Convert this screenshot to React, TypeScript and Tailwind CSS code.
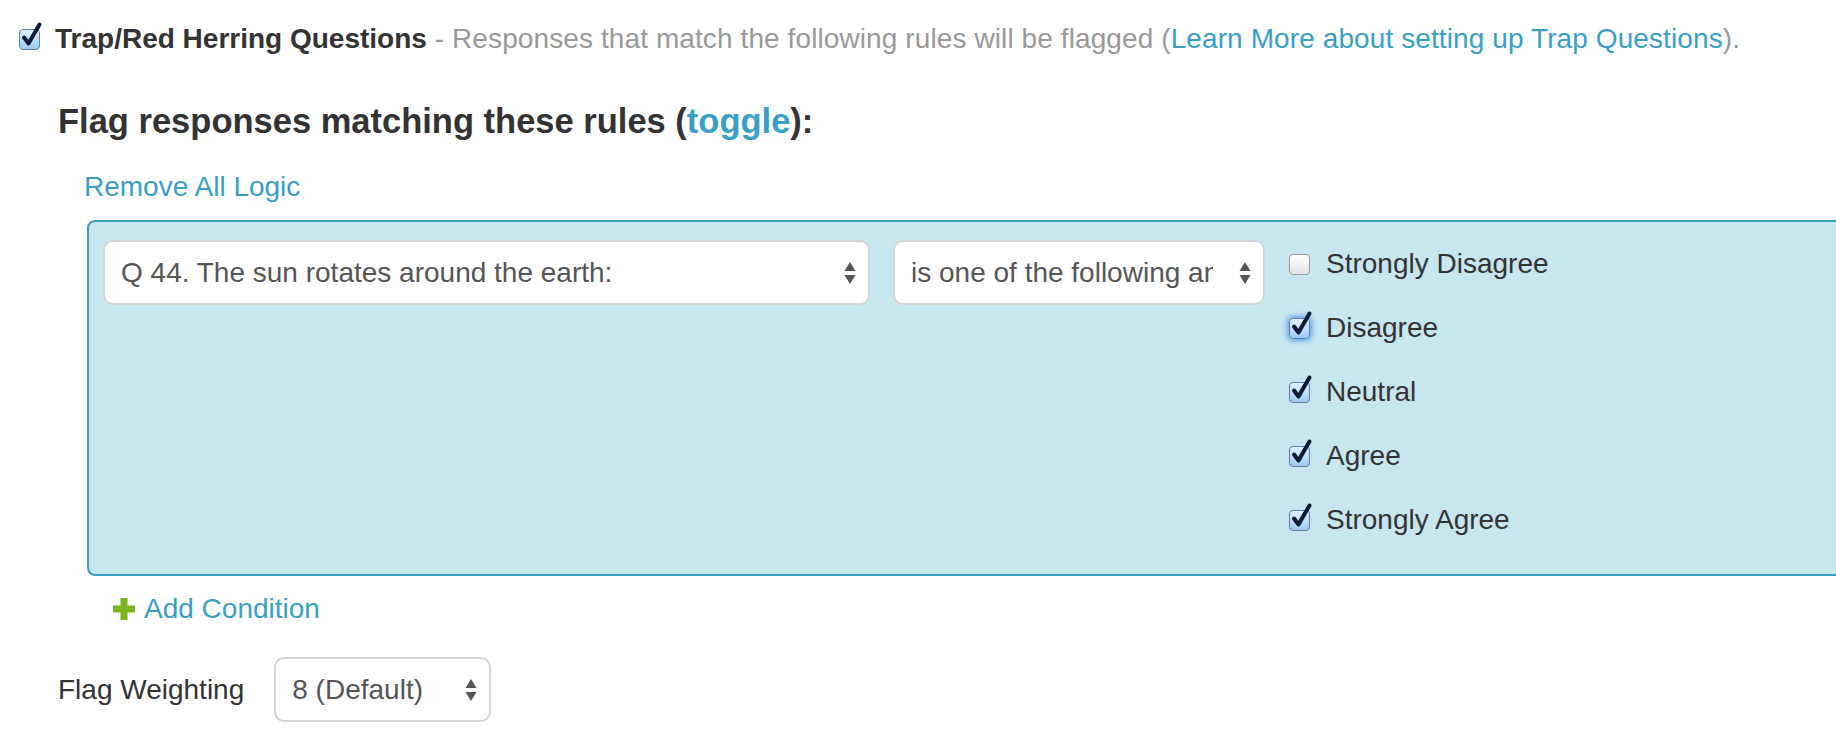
import React from 'react';

const LINK = 'text-[#3a9fc5]';

function CheckBox({ checked, focused }: { checked?: boolean; focused?: boolean }) {
  return (
    <span className="relative inline-block w-[21px] h-[21px] shrink-0">
      <span
        className={
          checked
            ? 'absolute inset-0 rounded-[4px] border border-[#5d7fa6] bg-[linear-gradient(#e3f1ff,#9ccbf3)]' +
              (focused ? ' shadow-[0_0_5px_2px_rgba(70,140,230,0.75)]' : '')
            : 'absolute inset-0 rounded-[4px] border border-[#9a9a9a] bg-[linear-gradient(#ffffff,#e4e4e4)]'
        }
      />
      {checked && (
        <svg className="absolute left-[1px] top-[-7px] overflow-visible" width="24" height="26" viewBox="0 0 24 26">
          <path d="M4 15.5 L8.5 21.5 L19.5 2.5" fill="none" stroke="#0c1c38" strokeWidth="4" strokeLinecap="round" strokeLinejoin="round" />
        </svg>
      )}
    </span>
  );
}

function Arrows() {
  return (
    <svg width="12" height="22" viewBox="0 0 12 22" className="shrink-0">
      <path d="M6 0 L11.5 9 L0.5 9 Z" fill="#555" />
      <path d="M6 22 L11.5 13 L0.5 13 Z" fill="#555" />
    </svg>
  );
}

function FakeSelect({ text, width, textWidth }: { text: string; width: string; textWidth?: string }) {
  return (
    <div className={`${width} h-[65px] shrink-0 flex items-center justify-between bg-white border-2 border-[#d4d4d4] rounded-[10px] pl-[16px] pr-[12px]`}>
      <span className={`whitespace-nowrap overflow-hidden text-[28px] text-[#555] ${textWidth ?? ''}`}>{text}</span>
      <Arrows />
    </div>
  );
}

const answers = [
  { label: 'Strongly Disagree', checked: false },
  { label: 'Disagree', checked: true, focused: true },
  { label: 'Neutral', checked: true },
  { label: 'Agree', checked: true },
  { label: 'Strongly Agree', checked: true },
];

export default function App() {
  return (
    <div className="w-[1836px] h-[748px] overflow-hidden bg-white text-[#333] font-['Liberation_Sans',Arial,sans-serif]">
      {/* header line */}
      <div className="flex items-center pt-[22px] pl-[19px] h-[56px] leading-[34px] text-[28px] whitespace-nowrap">
        <CheckBox checked />
        <span className="ml-[15px] font-bold">Trap/Red Herring Questions</span>
        <span className="text-[#999] tracking-[0.1px]">
          &nbsp;- Responses that match the following rules will be flagged (
          <span className={LINK}>Learn More about setting up Trap Questions</span>).
        </span>
      </div>

      <h4 className="mt-[45px] ml-[58px] text-[34.5px] leading-[40px] font-bold whitespace-nowrap">
        Flag responses matching these rules (<span className={LINK}>toggle</span>):
      </h4>

      <div className={`mt-[29px] ml-[84px] text-[28px] leading-[34px] ${LINK}`}>Remove All Logic</div>

      {/* condition box */}
      <div className="mt-[16px] ml-[87px] w-[1800px] border-2 border-[#3a9fc5] rounded-[8px] bg-[#c6e6f0] flex pl-[14px] pt-[10px] pb-[22px]">
        <div className="flex gap-[23px] pt-[8px] items-start">
          <FakeSelect text="Q 44. The sun rotates around the earth:" width="w-[767px]" />
          <FakeSelect text="is one of the following answers" width="w-[372px]" textWidth="w-[302px]" />
        </div>
        <div className="ml-[24px] flex flex-col">
          {answers.map((a) => (
            <div key={a.label} className="h-[64px] flex items-center gap-[16px] text-[28px]">
              <CheckBox checked={a.checked} focused={a.focused} />
              <span>{a.label}</span>
            </div>
          ))}
        </div>
      </div>

      <div className="mt-[16px] ml-[113px] flex items-center h-[34px] text-[28px]">
        <svg width="22" height="22" viewBox="0 0 22 22" className="shrink-0">
          <rect x="7.5" y="0" width="7" height="22" fill="#7ab51d" />
          <rect x="0" y="7.5" width="22" height="7" fill="#7ab51d" />
        </svg>
        <span className={`ml-[9px] ${LINK}`}>Add Condition</span>
      </div>

      <div className="mt-[31px] ml-[58px] flex items-center gap-[30px]">
        <span className="text-[28px] shrink-0 whitespace-nowrap">Flag Weighting</span>
        <FakeSelect text="8 (Default)" width="w-[217px]" />
      </div>
    </div>
  );
}
